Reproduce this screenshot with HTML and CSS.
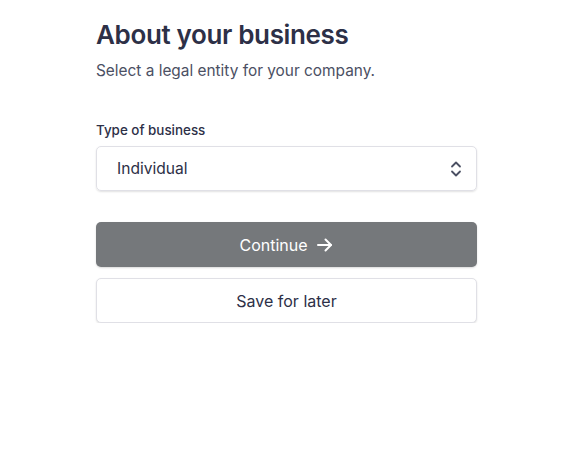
FILE: index.html
```html
<!doctype html>
<html lang="en">
	<head>
	<meta charset="utf-8">
	<title>About your business</title>
	<link rel="stylesheet" href="styles.css">
	</head>
	<body>
		<section class="panel">
			<h1>About your business</h1>
			<p class="lead">Select a legal entity for your company.</p>

			<label class="field-label" for="type">Type of business</label>
			<div class="select">
				<span>Individual</span>
				<svg class="chevrons" width="12" height="18" viewBox="0 0 12 18" fill="none" stroke="#4b5063" stroke-width="1.8" stroke-linecap="round" stroke-linejoin="round">
					<path d="M2 6.5 L6 2.5 L10 6.5"/>
					<path d="M2 11.5 L6 15.5 L10 11.5"/>
				</svg>
			</div>

			<div class="actions">
				<button class="btn btn-primary">Continue
					<svg width="18" height="16" viewBox="0 0 18 16" fill="none" stroke="#fff" stroke-width="2" stroke-linecap="round" stroke-linejoin="round">
						<path d="M2 8 H15"/>
						<path d="M9.5 2.5 L15 8 L9.5 13.5"/>
					</svg>
				</button>
				<button class="btn btn-secondary">Save for later</button>
			</div>
		</section>
	</body>
</html>
```

FILE: styles.css
```css
body {
	margin: 0;
	background: #fff;
	font-family: Inter, "Noto Sans", sans-serif;
	color: #2d3047;
}

.panel {
	width: 381px;
	margin-left: 96px;
	padding-top: 18px;
}

h1 {
	margin: 0;
	font-size: 26px;
	font-weight: 600;
	line-height: 34px;
	letter-spacing: -0.35px;
	color: #2d3047;
}

.lead {
	margin: 9px 0 0;
	font-size: 15.4px;
	line-height: 20px;
	color: #4b5063;
}

.field-label {
	display: block;
	margin-top: 40px;
	font-size: 13.4px;
	line-height: 18px;
	font-weight: 500;
	color: #2d3047;
}

.select {
	display: flex;
	align-items: center;
	justify-content: space-between;
	height: 45px;
	margin-top: 7px;
	padding: 0 14px 0 20px;
	box-sizing: border-box;
	border: 1px solid #e0e0e6;
	border-radius: 5px;
	box-shadow: 0 1px 2px rgba(0, 0, 0, 0.12);
	font-size: 15.6px;
	color: #2d3047;
}

.actions {
	display: flex;
	flex-direction: column;
	gap: 11px;
	margin-top: 31px;
}

.btn {
	display: flex;
	align-items: center;
	justify-content: center;
	gap: 8px;
	height: 45px;
	border-radius: 5px;
	font-family: inherit;
	font-size: 16px;
	font-weight: 400;
	cursor: pointer;
}

.btn-primary {
	background: #75787b;
	color: #fff;
	border: none;
	box-shadow: 0 1px 2px rgba(0, 0, 0, 0.15);
}

.btn-secondary {
	background: #fff;
	color: #2d3047;
	border: 1px solid #e0e0e6;
	box-shadow: 0 1px 2px rgba(0, 0, 0, 0.12);
}
```
